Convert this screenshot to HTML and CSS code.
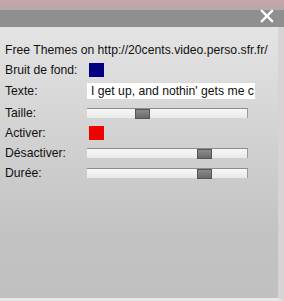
FILE: index.html
```html
<!DOCTYPE html>
<html>
<head>
<meta charset="utf-8">
<link rel="stylesheet" href="styles.css">
</head>
<body>
<div class="win">
  <div class="topstrip"></div>
  <div class="titlebar">
    <span class="close">
      <svg width="14" height="14" viewBox="0 0 14 14"><path d="M2 2L12 12M12 2L2 12" stroke="#fff" stroke-width="2.4" stroke-linecap="square"/></svg>
    </span>
  </div>
  <div class="body">
    <div class="header">Free Themes on http://20cents.video.perso.sfr.fr/</div>
    <div class="form">
      <div class="row"><span class="lbl">Bruit de fond:</span><span class="swatch navy"></span></div>
      <div class="row tall"><span class="lbl">Texte:</span><span class="input">I get up, and nothin' gets me c</span></div>
      <div class="row"><span class="lbl">Taille:</span><span class="slider"><span class="thumb" style="left:48px"></span></span></div>
      <div class="row"><span class="lbl">Activer:</span><span class="swatch red"></span></div>
      <div class="row"><span class="lbl">Désactiver:</span><span class="slider"><span class="thumb" style="left:110px"></span></span></div>
      <div class="row"><span class="lbl">Durée:</span><span class="slider"><span class="thumb" style="left:110px"></span></span></div>
    </div>
  </div>
</div>
</body>
</html>
```
FILE: styles.css
```css
html, body { margin: 0; padding: 0; }
body { width: 284px; height: 301px; overflow: hidden; font-family: "Liberation Sans", Arial, sans-serif; font-size: 12.2px; color: #111; }
.win { width: 284px; height: 301px; display: flex; flex-direction: column; background: #c4c4c4; position: relative; }
.topstrip { height: 10px; background: linear-gradient(#c9a5a8, #b5a9aa); }
.titlebar { height: 17px; background: #8f8f8f; display: flex; justify-content: flex-end; align-items: center; padding-right: 10px; }
.close { display: flex; margin-top: -6px; }
.body { flex: 1; background: linear-gradient(#e4e4e4 0%, #d2d2d2 40%, #c3c3c3 75%, #c0c0c0 100%); border-right: 6px solid #d8d4d4; border-bottom: 3px solid #e8e8e8; padding: 14px 0 0 5px; }
.header { height: 18px; line-height: 18px; white-space: nowrap; }
.form { display: flex; flex-direction: column; margin-top: 1px; }
.row { height: 20px; display: flex; align-items: center; }
.row.tall { height: 22px; margin-bottom: 1px; }
.lbl { width: 82px; flex: none; }
.swatch { width: 15px; height: 14px; margin-left: 2px; }
.navy { background: #000080; }
.red { background: #f00000; }
.input { background: #fff; height: 16px; line-height: 16px; width: 164px; padding-left: 4px; white-space: nowrap; overflow: hidden; }
.slider { position: relative; width: 160px; height: 9px; background: linear-gradient(#f7f7f7, #e9e9e9); border-top: 1px solid #8c8c8c; border-right: 1px solid #9a9a9a; }
.thumb { position: absolute; top: 0; width: 15px; height: 10px; background: linear-gradient(#8c8c8c, #6a6a6a); border: 1px solid #555; box-sizing: border-box; }
```
